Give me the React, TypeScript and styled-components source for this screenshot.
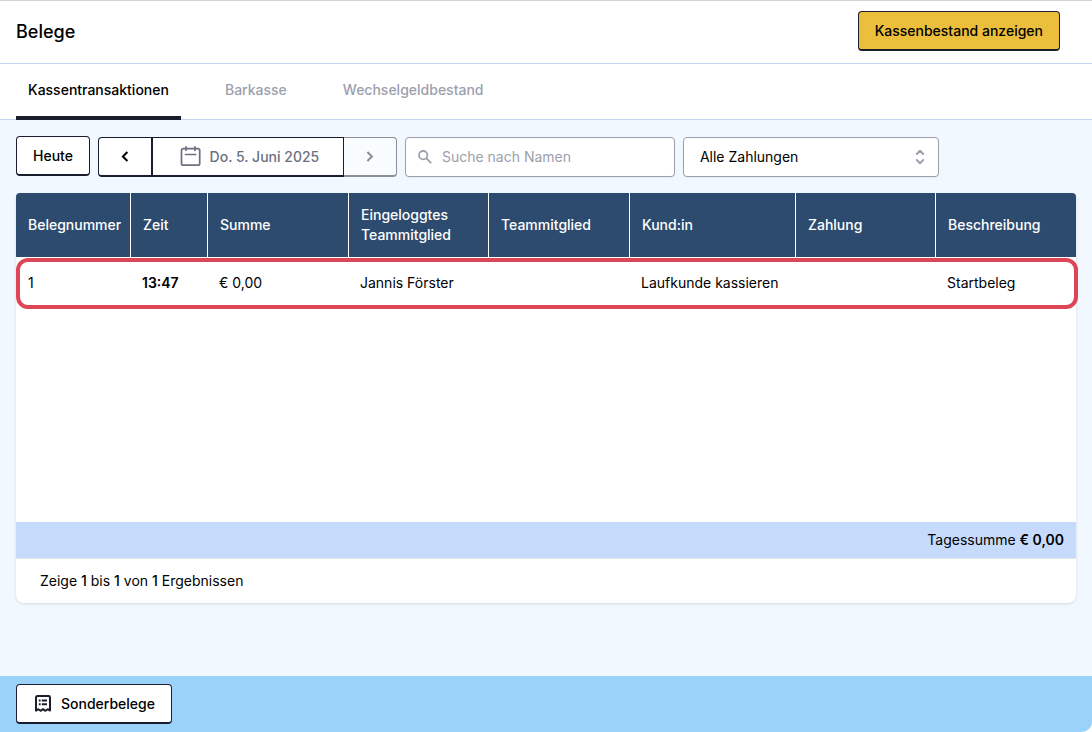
import React from "react";
import styled, { createGlobalStyle, css } from "styled-components";

const ink = "#1a1d2b";

const GlobalStyle = createGlobalStyle`
  *, *::before, *::after { box-sizing: border-box; }
  body {
    margin: 0;
    background: #ffffff;
    color: #000000;
    font-family: Inter, "Liberation Sans", sans-serif;
    font-size: 14px;
    line-height: 20px;
  }
  button, input, select { font: inherit; color: inherit; margin: 0; }
`;

const Page = styled.div`
  display: flex;
  flex-direction: column;
  min-height: 100vh;
`;

const Header = styled.header`
  display: flex;
  align-items: flex-start;
  justify-content: space-between;
  padding: 10px 32px 12px 16px;
  border-top: 1px solid #d4d4d6;
  border-bottom: 1px solid #c7d6ef;
`;

const Title = styled.h1`
  margin: 0;
  padding-top: 9px;
  font-size: 18px;
  line-height: 24px;
  font-weight: 500;
`;

const Button = styled.button<{ $primary?: boolean }>`
  display: inline-flex;
  align-items: center;
  justify-content: center;
  gap: 8px;
  height: 40px;
  padding: 0 16px;
  border: 1px solid ${ink};
  border-bottom-width: 2px;
  border-radius: 4px;
  background: ${(p) => (p.$primary ? "#ebbe3c" : "#ffffff")};
  font-weight: 500;
  white-space: nowrap;
`;

const Tabs = styled.nav`
  display: flex;
  gap: 32px;
  height: 56px;
  padding: 0 16px;
  border-bottom: 1px solid #c7d6ef;
`;

const Tab = styled.a<{ $active?: boolean }>`
  height: 56px;
  padding: 16px 12px 0;
  font-weight: 500;
  text-decoration: none;
  color: ${(p) => (p.$active ? "#000000" : "#9ca0ad")};
  border-bottom: 4px solid ${(p) => (p.$active ? ink : "transparent")};
`;

const Main = styled.main`
  flex: 1;
  padding: 16px;
  background: #f1f8ff;
`;

const Toolbar = styled.div`
  display: flex;
  gap: 8px;
  padding-bottom: 16px;
`;

const Filters = styled.div`
  display: flex;
  gap: 8px;
  padding-top: 1px;
`;

const DateGroup = styled.div`
  display: flex;
  height: 40px;
`;

const groupPart = css`
  display: flex;
  align-items: center;
  justify-content: center;
  padding: 0;
  border: 1px solid ${ink};
  border-bottom-width: 2px;
  background: #ffffff;
`;

const StepButton = styled.button<{ $side: "left" | "right" }>`
  ${groupPart}
  width: ${(p) => (p.$side === "left" ? "54px" : "53px")};
  border-radius: ${(p) => (p.$side === "left" ? "4px 0 0 4px" : "0 4px 4px 0")};
  &:disabled {
    color: #8b8d94;
    background: #f8fcff;
    border-color: #8b8e96;
    border-left: 0;
  }
`;

const DateButton = styled.button`
  ${groupPart}
  gap: 8px;
  width: 192px;
  padding-left: 3px;
  color: #6b6f80;
  font-weight: 500;
`;

const SearchBox = styled.label`
  display: flex;
  align-items: center;
  gap: 8px;
  width: 270px;
  height: 40px;
  padding: 0 12px 0 10px;
  border: 1px solid #9ca0ad;
  border-radius: 4px;
  background: #ffffff;
  box-shadow: 0 1px 2px rgba(0, 0, 0, 0.06);
  color: #9ca0ad;
`;

const SearchInput = styled.input`
  flex: 1;
  min-width: 0;
  padding: 0;
  border: 0;
  outline: 0;
  background: transparent;
  color: #000000;
  &::placeholder { color: #9ca0ad; opacity: 1; }
`;

const SelectBox = styled.div`
  position: relative;
  width: 256px;
  height: 40px;
  color: #9ca0ad;
  svg {
    position: absolute;
    right: 9px;
    top: 10px;
    pointer-events: none;
  }
`;

const Select = styled.select`
  width: 100%;
  height: 100%;
  padding: 0 32px 0 16px;
  appearance: none;
  border: 1px solid #9ca0ad;
  border-radius: 4px;
  background: #ffffff;
  box-shadow: 0 1px 2px rgba(0, 0, 0, 0.06);
  color: #000000;
`;

const Card = styled.section`
  border-radius: 4px 4px 8px 8px;
  background: #ffffff;
  box-shadow: 0 1px 3px rgba(0, 0, 0, 0.12);
`;

const TableArea = styled.div`
  position: relative;
  min-height: 329px;
`;

const Table = styled.table`
  width: 100%;
  table-layout: fixed;
  border-collapse: separate;
  border-spacing: 0;
`;

const HeadCell = styled.th`
  height: 64px;
  padding: 0 8px 0 12px;
  background: #2d4b6e;
  color: #ffffff;
  font-weight: 500;
  text-align: left;
  & + & { border-left: 1px solid #ffffff; }
  &:first-child { border-top-left-radius: 4px; }
  &:last-child { border-top-right-radius: 4px; }
`;

const Cell = styled.td<{ $strong?: boolean }>`
  height: 52px;
  padding: 0 12px;
  font-weight: ${(p) => (p.$strong ? 600 : 400)};
  white-space: nowrap;
`;

const RowHighlight = styled.div`
  position: absolute;
  top: 65px;
  left: 0;
  right: -2px;
  height: 51px;
  border: 4px solid #dc4656;
  border-radius: 12px;
  pointer-events: none;
`;

const TotalBar = styled.div`
  padding: 8px 12px;
  background: #c6dafc;
  text-align: right;
`;

const ResultInfo = styled.p`
  margin: 0;
  padding: 12px 24px;
  border-top: 1px solid #e3e5ea;
`;

const Strong = styled.strong<{ $medium?: boolean }>`
  font-weight: ${(p) => (p.$medium ? 500 : 600)};
`;

const Footer = styled.footer`
  padding: 8px 16px;
  border-bottom-right-radius: 10px;
  background: #9bd2f9;
`;

const FooterWrap = styled.div`
  background: #ffffff;
`;

const Chevron = ({ right }: { right?: boolean }) => (
  <svg width="20" height="20" viewBox="0 0 20 20" fill="none" stroke="currentColor" strokeWidth="2" aria-hidden="true">
    <path d={right ? "M7.4 5 L11.9 9.5 L7.4 14" : "M12.4 5 L7.9 9.5 L12.4 14"} />
  </svg>
);

const CalendarIcon = () => (
  <svg width="22" height="22" viewBox="0 0 22 22" fill="none" stroke="currentColor" strokeWidth="1.7" strokeLinecap="round" strokeLinejoin="round" aria-hidden="true">
    <rect x="1.5" y="2.6" width="18.2" height="16.6" rx="1.8" />
    <path d="M6 0.9v3.4M15 0.9v3.4M5.6 8.5h10" />
  </svg>
);

const SearchIcon = () => (
  <svg width="18" height="18" viewBox="0 0 18 18" fill="none" stroke="currentColor" strokeWidth="1.8" aria-hidden="true">
    <circle cx="7.2" cy="7.2" r="4.2" />
    <path d="M10.2 10.2 L15.2 15.2" />
  </svg>
);

const SelectorIcon = () => (
  <svg width="20" height="20" viewBox="0 0 20 20" fill="none" stroke="currentColor" strokeWidth="2" strokeLinecap="round" strokeLinejoin="round" aria-hidden="true">
    <path d="M6.8 7 L10 3.8 L13.2 7M6.8 13 L10 16.2 L13.2 13" />
  </svg>
);

const ReceiptIcon = () => (
  <svg width="20" height="20" viewBox="0 0 20 20" fill="none" stroke={ink} strokeWidth="2" aria-hidden="true">
    <path d="M3 16.6V3.4a1.4 1.4 0 0 1 1.4-1.4h11.2a1.4 1.4 0 0 1 1.4 1.4V16.6L14.7 15.2L12.4 16.8L10 15.2L7.6 16.8L5.3 15.2Z" strokeLinejoin="round" />
    <path d="M5.8 6.5h1.8M8.8 6.5h5.2M5.8 10.2h1.8M8.8 10.2h5.2" />
  </svg>
);

const columns = [
  { label: "Belegnummer", width: 114 },
  { label: "Zeit", width: 77 },
  { label: "Summe", width: 141 },
  { label: "Eingeloggtes Teammitglied", width: 140 },
  { label: "Teammitglied", width: 141 },
  { label: "Kund:in", width: 166 },
  { label: "Zahlung", width: 140 },
  { label: "Beschreibung", width: 141 },
];

const receipts = [["1", "13:47", "€ 0,00", "Jannis Förster", "", "Laufkunde kassieren", "", "Startbeleg"]];

export default function App() {
  return (
    <>
      <GlobalStyle />
      <Page>
        <Header>
          <Title>Belege</Title>
          <Button type="button" $primary>Kassenbestand anzeigen</Button>
        </Header>
        <Tabs>
          <Tab href="#kassentransaktionen" $active aria-current="page">Kassentransaktionen</Tab>
          <Tab href="#barkasse">Barkasse</Tab>
          <Tab href="#wechselgeldbestand">Wechselgeldbestand</Tab>
        </Tabs>
        <Main>
          <Toolbar>
            <Button type="button">Heute</Button>
            <Filters>
              <DateGroup>
                <StepButton type="button" $side="left" aria-label="Vorheriger Tag"><Chevron /></StepButton>
                <DateButton type="button"><CalendarIcon />Do. 5. Juni 2025</DateButton>
                <StepButton type="button" $side="right" aria-label="Nächster Tag" disabled><Chevron right /></StepButton>
              </DateGroup>
              <SearchBox>
                <SearchIcon />
                <SearchInput type="text" placeholder="Suche nach Namen" aria-label="Suche nach Namen" />
              </SearchBox>
              <SelectBox>
                <Select aria-label="Zahlungen" defaultValue="all">
                  <option value="all">Alle Zahlungen</option>
                </Select>
                <SelectorIcon />
              </SelectBox>
            </Filters>
          </Toolbar>
          <Card>
            <TableArea>
              <Table>
                <colgroup>
                  {columns.map((c) => <col key={c.label} width={c.width} />)}
                </colgroup>
                <thead>
                  <tr>{columns.map((c) => <HeadCell key={c.label} scope="col">{c.label}</HeadCell>)}</tr>
                </thead>
                <tbody>
                  {receipts.map((row) => (
                    <tr key={row[0]}>
                      {row.map((value, i) => <Cell key={columns[i].label} $strong={i === 1}>{value}</Cell>)}
                    </tr>
                  ))}
                </tbody>
              </Table>
              <RowHighlight />
            </TableArea>
            <TotalBar>Tagessumme <Strong>€ 0,00</Strong></TotalBar>
            <ResultInfo>
              Zeige <Strong $medium>1</Strong> bis <Strong $medium>1</Strong> von <Strong $medium>1</Strong> Ergebnissen
            </ResultInfo>
          </Card>
        </Main>
        <FooterWrap>
          <Footer>
            <Button type="button"><ReceiptIcon />Sonderbelege</Button>
          </Footer>
        </FooterWrap>
      </Page>
    </>
  );
}
